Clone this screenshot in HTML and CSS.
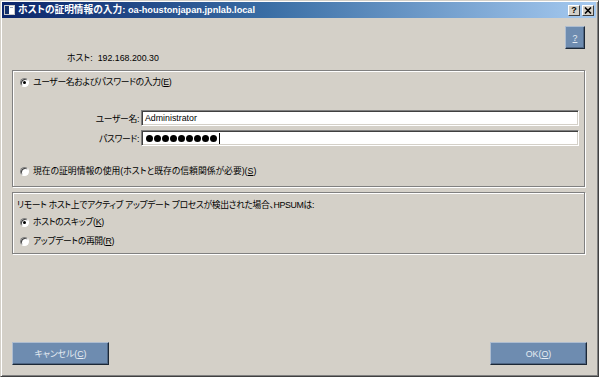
FILE: index.html
```html
<!DOCTYPE html>
<html lang="ja">
<head>
<meta charset="utf-8">
<title>ホストの証明情報の入力</title>
<link rel="stylesheet" href="styles.css">
</head>
<body>
<div class="window">
  <div class="titlebar">
    <svg class="ticon" width="11" height="10" viewBox="0 0 11 10">
      <rect x="0.5" y="0.5" width="10" height="9" fill="#ffffff" stroke="#c8c8c8"/>
      <rect x="1" y="1" width="4" height="8" fill="#14306a"/>
      <rect x="6" y="2" width="3" height="1" fill="#9aa8c0"/>
    </svg>
    <div class="title"><span class="tj">ホストの証明情報の入力:</span> oa-houstonjapan.jpnlab.local</div>
    <div class="tbtns">
      <span class="tbtn">?</span>
      <span class="tbtn"><svg width="8" height="7" viewBox="0 0 8 7"><path d="M1 0.5 L7 6.5 M7 0.5 L1 6.5" stroke="#000" stroke-width="1.6"/></svg></span>
    </div>
  </div>
  <div class="content">
    <div class="help-row"><button class="btn help"><u>?</u></button></div>
    <div class="host-row"><span class="host-label">ホスト:</span><span>192.168.200.30</span></div>

    <div class="group g1">
      <div class="radio-row"><span class="radio checked"></span><span class="kana">ユーザー名およびパスワードの入力(<u>E</u>)</span></div>
      <div class="fields">
        <div class="field"><span class="flabel kana">ユーザー名:</span><div class="input">Administrator</div></div>
        <div class="field"><span class="flabel kana">パスワード:</span><div class="input pw"><i></i><i></i><i></i><i></i><i></i><i></i><i></i><i></i><i></i><b class="caret"></b></div></div>
      </div>
      <div class="radio-row r2"><span class="radio"></span><span>現在の証明情報の使用(ホストと既存の信頼関係が必要)(<u>S</u>)</span></div>
    </div>

    <div class="group g2">
      <div class="g2text kana">リモート ホスト上でアクティブ アップデート プロセスが検出された場合、HPSUMは:</div>
      <div class="radio-row r3"><span class="radio checked"></span><span class="kana">ホストのスキップ(<u>K</u>)</span></div>
      <div class="radio-row r4"><span class="radio"></span><span class="kana">アップデートの再開(<u>R</u>)</span></div>
    </div>

    <div class="spacer"></div>
    <div class="buttons">
      <button class="btn action">キャンセル(<u>C</u>)</button>
      <button class="btn action ok">OK(<u>O</u>)</button>
    </div>
  </div>
</div>
</body>
</html>
```

FILE: styles.css
```css
* { box-sizing: border-box; margin: 0; padding: 0; }
html, body { width: 599px; height: 377px; overflow: hidden; }
body {
  background: #d4d0c8;
  font-family: "Liberation Sans", "Noto Sans CJK JP", sans-serif;
  font-size: 8.8px;
  color: #000;
  font-feature-settings: "palt";
}
.kana { letter-spacing: -0.35px; }
.window {
  width: 599px;
  height: 377px;
  display: flex;
  flex-direction: column;
  background: #d4d0c8;
  border: 1px solid;
  border-color: #d4d0c8 #404040 #404040 #d4d0c8;
  box-shadow: inset 1px 1px 0 #ffffff, inset -1px -1px 0 #808080;
  padding: 1px 2px 2px 1px;
}
.titlebar {
  height: 16px;
  flex: none;
  display: flex;
  align-items: center;
  background: linear-gradient(to right, #0a246a 0%, #3a6ea5 45%, #a6caf0 100%);
  color: #fff;
  padding: 0 1px;
}
.ticon { flex: none; margin-left: 1px; }
.title {
  margin-left: 3px;
  font-weight: bold;
  font-size: 9.2px;
  white-space: nowrap;
  flex: 1;
  line-height: 16px;
}
.tj { font-size: 9.7px; }
.tbtns { display: flex; gap: 2px; margin-right: 1px; }
.tbtn {
  width: 12px;
  height: 11px;
  display: flex;
  align-items: center;
  justify-content: center;
  background: #d4d0c8;
  border: 1px solid;
  border-color: #ffffff #404040 #404040 #ffffff;
  color: #000;
  font-weight: bold;
  font-size: 9px;
  line-height: 1;
}
.content {
  flex: 1;
  display: flex;
  flex-direction: column;
  padding: 0 10px 9px 10px;
}
.help-row { display: flex; justify-content: flex-end; padding-top: 8px; }
.btn {
  font-family: inherit;
  font-feature-settings: "palt";
  font-size: 8.8px;
  color: #e6ecf3;
  background: #6e8cb0;
  border: 1px solid;
  border-color: #aebdd0 #1c2836 #1c2836 #aebdd0;
  box-shadow: inset -1px -1px 0 #4f6684;
  display: flex;
  align-items: center;
  justify-content: center;
}
.help { width: 20px; height: 23px; margin-right: 1px; }
.host-row {
  margin-top: 3px;
  height: 12px;
  line-height: 12px;
  padding-left: 55px;
  display: flex;
  gap: 5px;
}
.group {
  flex: none;
  border: 1px solid #808080;
  box-shadow: inset 1px 1px 0 #ffffff, 1px 1px 0 #ffffff;
  margin-right: 1px;
  padding: 0 5px 0 7px;
}
.g1 { margin-top: 6px; height: 117px; padding-top: 5px; }
.g2 { margin-top: 5px; height: 62px; padding-top: 6px; }
.radio-row {
  display: flex;
  align-items: center;
  gap: 4px;
  height: 12px;
  line-height: 12px;
  white-space: nowrap;
}
.radio {
  flex: none;
  width: 9px;
  height: 9px;
  border-radius: 50%;
  background: #fff;
  border: 1px solid;
  border-color: #808080 #ffffff #ffffff #808080;
  box-shadow: inset 1px 1px 0 #404040;
  position: relative;
}
.radio.checked::after {
  content: "";
  position: absolute;
  left: 2px;
  top: 2px;
  width: 3px;
  height: 3px;
  border-radius: 50%;
  background: #000;
}
.fields { margin-top: 22px; display: flex; flex-direction: column; gap: 4px; }
.field { display: flex; align-items: center; height: 16px; }
.flabel { width: 119px; text-align: right; flex: none; margin-right: 2px; }
.input {
  flex: 1;
  height: 16px;
  background: #fff;
  border: 1px solid;
  border-color: #808080 #ffffff #ffffff #808080;
  box-shadow: inset 1px 1px 0 #404040, inset -1px -1px 0 #d4d0c8;
  padding-left: 3px;
  line-height: 14px;
  display: flex;
  align-items: center;
}
.pw { padding-left: 4px; gap: 1px; }
.pw i {
  display: block;
  width: 7px;
  height: 7px;
  border-radius: 50%;
  background: #000;
}
.pw .caret { display: block; width: 1px; height: 11px; background: #000; margin-left: 1px; }
.r2 { margin-top: 19px; }
.g2text { height: 12px; line-height: 12px; margin-left: -3px; white-space: nowrap; }
.r3 { margin-top: 5px; }
.r4 { margin-top: 7px; }
.spacer { flex: 1; }
.buttons { display: flex; justify-content: space-between; margin-right: -1px; }
.action { width: 97px; height: 23px; }
u { text-decoration: underline; }
```
